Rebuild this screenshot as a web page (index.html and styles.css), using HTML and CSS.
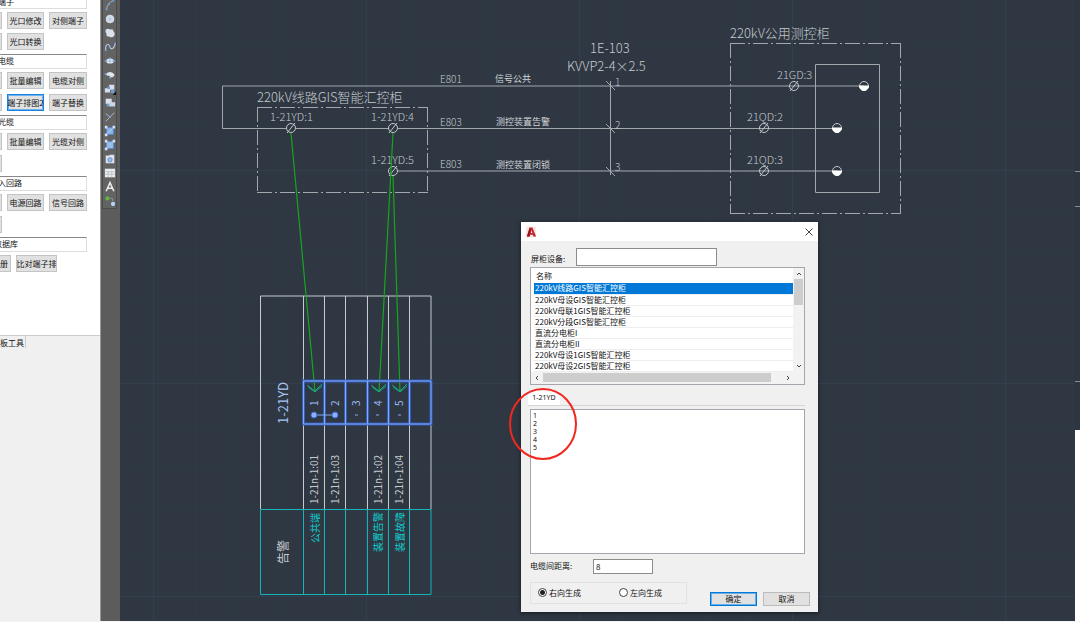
FILE: index.html
```html
<!DOCTYPE html>
<html lang="zh-CN">
<head>
<meta charset="utf-8">
<title>端子排图</title>
<link rel="stylesheet" href="styles.css">
</head>
<body>
<div class="workspace">
  <aside class="palette">
    <div class="palette-sheet">
      <h2 class="group-title first"><span>端子</span></h2>
      <div class="tools tight">
        <button aria-label="端子工具"></button><button>光口修改</button><button>对侧端子</button>
        <button aria-label="光口工具"></button><button>光口转换</button>
      </div>
      <h2 class="group-title"><span>电缆</span></h2>
      <div class="tools">
        <button aria-label="电缆工具"></button><button>批量编辑</button><button>电缆对侧</button>
        <button aria-label="端子排工具"></button><button class="focus">端子排图2</button><button>端子替换</button>
      </div>
      <h2 class="group-title"><span>光缆</span></h2>
      <div class="tools">
        <button aria-label="光缆工具"></button><button>批量编辑</button><button>光缆对侧</button>
        <button aria-label="光缆设置"></button>
      </div>
      <h2 class="group-title"><span>出入回路</span></h2>
      <div class="tools">
        <button aria-label="回路工具"></button><button>电源回路</button><button>信号回路</button>
        <button aria-label="回路设置"></button>
      </div>
      <h2 class="group-title"><span>数据库</span></h2>
      <div class="tools wide">
        <button>数据注册</button><button>比对端子排</button>
      </div>
    </div>
    <div class="palette-tab"><span>模板工具</span></div>
  </aside>

  <nav class="rail" aria-label="绘图">
    <div class="rail-tools">
      <button aria-label="圆弧"><svg viewBox="0 0 14 14"><path d="M3 12Q4 4 11 2" fill="none" stroke="#a9bfd8"/><path d="M2 11h2v2H2zM10 1h2v2h-2zM5 5h2v2H5z" fill="#6fa0dd"/></svg></button>
      <button aria-label="圆"><svg viewBox="0 0 14 14"><circle cx="7" cy="7" r="4.500" fill="#cfdae8" stroke="#e2e7ee"/><circle cx="7" cy="7" r="1" fill="#8fb1dc"/></svg></button>
      <button aria-label="修订云线"><svg viewBox="0 0 14 14"><path d="M2 3Q5 1 7 3Q11 2 11 5Q14 9 11 11Q8 13 6 11Q2 12 3 8Q1 6 2 3Z" fill="#dbe1e9"/></svg></button>
      <button aria-label="样条曲线"><svg viewBox="0 0 14 14"><path d="M2 11C1 1 7 4 7 7S12 10 13 3" fill="none" stroke="#b9cfeb" stroke-width="1.200"/><path d="M1 10h2v2H1zM6 6h2v2H6zM12 2h2v2h-2z" fill="#6fa0dd"/></svg></button>
      <button aria-label="椭圆"><svg viewBox="0 0 14 14"><ellipse cx="7" cy="7" rx="4.500" ry="3" fill="#dce4ee"/><path d="M1 6h3v2H1zM10 6h3v2h-3zM6 3h2v2H6zM6 6h2v2H6z" fill="#79a6de"/></svg></button>
      <button aria-label="椭圆弧"><svg viewBox="0 0 14 14"><path d="M2 6Q7 1 12 6Q13 9 7 10Q8 7 4 8Z" fill="#dfe5ed"/><path d="M1 5h2v2H1zM6 9h2v2H6z" fill="#79a6de"/></svg></button>
      <button aria-label="插入块"><svg viewBox="0 0 14 14"><path d="M1 6h6v5H1zM6 2h6v6H6z" fill="#d5deea"/><path d="M4 4h3v3H4zM8 8h4v4H8z" fill="#6d9bd5"/><path d="M14 10v4h-4z" fill="#111"/></svg></button>
      <button aria-label="创建块"><svg viewBox="0 0 14 14"><path d="M2 2h7v6H2z" fill="#dce3ec"/><path d="M6 6h7v5H6z" fill="#cad7e7"/><path d="M3 8h3v3H3z" fill="#719fd8"/></svg></button>
      <button aria-label="点"><svg viewBox="0 0 14 14"><path d="M2 3L7 7M12 2L2 12" fill="none" stroke="#b9c4d2"/><path d="M6 6h2v2H6z" fill="#79a6de"/></svg></button>
      <button aria-label="图案填充"><svg viewBox="0 0 14 14"><path d="M3 3h8v8H3z" fill="#8ab3e6" stroke="#4d88d0"/><path d="M1 1h3v3H1zM10 1h3v3h-3zM1 10h3v3H1z" fill="#d3e1f3"/><path d="M5 9L9 5" stroke="#c5d9f2"/></svg></button>
      <button aria-label="渐变色"><svg viewBox="0 0 14 14"><path d="M3 3h8v8H3z" fill="#9dbde6" stroke="#4e91df"/><path d="M1 1h3v3H1zM10 1h3v3h-3zM1 10h3v3H1z" fill="#d3e1f3"/></svg></button>
      <button aria-label="面域"><svg viewBox="0 0 14 14"><path d="M2 3h4l1-1h5v10H2z" fill="#dbe3ed"/><circle cx="7" cy="8" r="2.500" fill="#9fc1ea" stroke="#5688c4"/></svg></button>
      <button aria-label="表格"><svg viewBox="0 0 14 14"><path d="M1 2h12v10H1z" fill="#e9ecef"/><path d="M1 5.500h12M1 8.500h12M5 5v7M9 5v7" stroke="#a4a9b0" stroke-width=".6"/></svg></button>
      <button aria-label="多行文字"><svg viewBox="0 0 14 14"><path d="M2.500 12L7 2L11.500 12M4 8.500h6" fill="none" stroke="#eee" stroke-width="1.800"/></svg></button>
      <button aria-label="添加选定对象"><svg viewBox="0 0 14 14"><circle cx="4" cy="4" r="2.500" fill="#62b33f"/><circle cx="10.500" cy="10.500" r="2.500" fill="#b6d3f5"/><path d="M7.500 4h2.500v3" fill="none" stroke="#8f9aa5"/></svg></button>
    </div>
  </nav>

  <main class="canvas">
    <svg class="drawing" aria-label="端子接线图">
      <defs>
        <pattern id="grid" x="33" y="170" width="213" height="213" patternUnits="userSpaceOnUse">
          <path class="grid-minor" d="M43 0V213M85 0V213M128 0V213M170 0V213M0 43H213M0 85H213M0 128H213M0 170H213"/>
          <path class="grid-major" d="M.5 0V213M0 .5H213"/>
        </pattern>
        <g id="terminal"><circle r="4.500"/><path d="M-4 5L4 -5"/></g>
        <g id="contact"><circle r="4.500"/><path class="solid" d="M-4.500 0H4.500A4.500 4.500 0 0 1 -4.500 0Z"/></g>
        <path id="arrow" d="M-8 -7L0 -1L7 -8M-7 -5L0 0L7 -6"/>
      </defs>
      <rect width="100%" height="100%" fill="url(#grid)"/>
      <g transform="translate(-120 0)">
        <g class="wire">
          <path d="M864 86H222.500V128.500H286M296 128.500H389M398 128.500H837M398 171H837M610.500 81V175"/>
          <path d="M606 81L615 90M606 124L615 133M606 167L615 176"/>
          <path d="M815.500 64.500H879.500V192.500H815.500Z"/>
        </g>
        <path class="frame" d="M257 107.500H428M257 192.500H428M257.500 107V193M427.500 107V193M730 43.500H901M730 213.500H901M730.500 43V214M900.500 43V214"/>
        <g class="symbol">
          <use href="#terminal" x="291" y="128"/><use href="#terminal" x="393" y="128"/><use href="#terminal" x="393" y="171"/>
          <use href="#terminal" x="794" y="86"/><use href="#terminal" x="764" y="128"/><use href="#terminal" x="764" y="171"/>
          <use href="#contact" x="864" y="86"/><use href="#contact" x="837" y="128"/><use href="#contact" x="837" y="171"/>
        </g>
        <g class="label large">
          <text x="257" y="102">220kV线路GIS智能汇控柜</text>
          <text x="730" y="38">220kV公用测控柜</text>
          <text x="590" y="53">1E-103</text>
          <text x="567" y="71">KVVP2-4×2.5</text>
        </g>
        <g class="label medium">
          <text x="270" y="121">1-21YD:1</text><text x="371" y="121">1-21YD:4</text><text x="371" y="164">1-21YD:5</text>
          <text x="777" y="79">21GD:3</text><text x="747" y="121">21QD:2</text><text x="747" y="164">21QD:3</text>
        </g>
        <g class="label small">
          <text x="440" y="83">E801</text><text x="440" y="126">E803</text><text x="440" y="168">E803</text>
          <text x="615" y="86">1</text><text x="615" y="129">2</text><text x="615" y="171">3</text>
        </g>
        <g class="label note">
          <text x="495" y="82">信号公共</text><text x="496" y="125">测控装置告警</text><text x="496" y="168">测控装置闭锁</text>
        </g>

        <path class="table-line" d="M260.500 509V296H431V509M303.500 296V509M324.500 296V509M345.500 296V509M367.500 296V509M388.500 296V509M409.500 296V509"/>
        <path class="table-line cyan" d="M260.500 509.500H431V594.500H260.500ZM303.500 509V594M324.500 509V594M345.500 509V594M367.500 509V594M388.500 509V594M409.500 509V594"/>
        <path class="jump" d="M291 133L315 392M393 133L379 392M393 176L400 392"/>
        <g class="picked">
          <path class="glow" d="M303.500 381H431V424H303.500ZM324.500 381V424M345.500 381V424M367.500 381V424M388.500 381V424M409.500 381V424"/>
          <path class="core" d="M303.500 381H431V424H303.500ZM324.500 381V424M345.500 381V424M367.500 381V424M388.500 381V424M409.500 381V424"/>
          <path class="core" d="M314 415H335"/>
          <circle cx="314" cy="415" r="3"/><circle cx="335" cy="415" r="3"/>
          <path class="core" d="M355 415h3M376 415h3M398 415h3"/>
        </g>
        <g class="arrows"><use href="#arrow" x="315" y="392"/><use href="#arrow" x="379" y="392"/><use href="#arrow" x="400" y="392"/></g>
        <g class="label strip">
          <text class="name" transform="translate(288 424) rotate(-90)">1-21YD</text>
          <text class="pin" transform="translate(318 406) rotate(-90)">1</text>
          <text class="pin" transform="translate(339 406) rotate(-90)">2</text>
          <text class="pin" transform="translate(360 406) rotate(-90)">3</text>
          <text class="pin" transform="translate(382 406) rotate(-90)">4</text>
          <text class="pin" transform="translate(403 406) rotate(-90)">5</text>
          <text transform="translate(318 504) rotate(-90)">1-21n-1:01</text>
          <text transform="translate(339 504) rotate(-90)">1-21n-1:03</text>
          <text transform="translate(382 504) rotate(-90)">1-21n-1:02</text>
          <text transform="translate(403 504) rotate(-90)">1-21n-1:04</text>
          <text class="desc" transform="translate(319 543) rotate(-90)">公共端</text>
          <text class="desc" transform="translate(382 552) rotate(-90)">装置告警</text>
          <text class="desc" transform="translate(404 552) rotate(-90)">装置故障</text>
          <text class="kind" transform="translate(288 564) rotate(-90)">告警</text>
        </g>
      </g>
    </svg>

    <form class="dialog" role="dialog" aria-label="屏柜设备">
      <header class="titlebar">
        <svg class="logo" viewBox="0 0 12 12"><path d="M0 0h11v12H0z" fill="#f9e5e0"/><path d="M1 11L4 1H7L11 11H8L7.300 9H4.600L4 11ZM5 7H7L6 4Z" fill="#c3272f"/><path d="M1 11L4 1L5 4L4 11Z" fill="#97171f"/></svg>
        <button type="button" class="close" aria-label="关闭"><svg viewBox="0 0 8 8"><path d="M.5 .5L7.500 7.500M7.500 .5L.5 7.500" fill="none" stroke="#333" stroke-width=".9"/></svg></button>
      </header>
      <div class="content">
        <div class="field device"><label for="device">屏柜设备:</label><input id="device" type="text"></div>
        <div class="listview">
          <table>
            <thead><tr><th>名称</th></tr></thead>
            <tbody>
              <tr class="selected"><td>220kV线路GIS智能汇控柜</td></tr>
              <tr><td>220kV母设GIS智能汇控柜</td></tr>
              <tr><td>220kV母联1GIS智能汇控柜</td></tr>
              <tr><td>220kV分段GIS智能汇控柜</td></tr>
              <tr><td>直流分电柜I</td></tr>
              <tr><td>直流分电柜II</td></tr>
              <tr><td>220kV母设1GIS智能汇控柜</td></tr>
              <tr><td>220kV母设2GIS智能汇控柜</td></tr>
            </tbody>
          </table>
          <div class="vscroll">
            <svg viewBox="0 0 6 6"><path d="M1 4L3 2L5 4"/></svg><i class="thumb"></i><svg viewBox="0 0 6 6"><path d="M1 2L3 4L5 2"/></svg>
          </div>
          <div class="hscroll">
            <svg viewBox="0 0 6 6"><path d="M4 1L2 3L4 5"/></svg><i class="thumb"></i><svg viewBox="0 0 6 6"><path d="M2 1L4 3L2 5"/></svg>
          </div>
        </div>
        <div class="tabs"><button type="button">1-21YD</button></div>
        <ul class="pins"><li>1</li><li>2</li><li>3</li><li>4</li><li>5</li></ul>
        <div class="field spacing"><label for="spacing">电缆间距离:</label><input id="spacing" type="text" value="8"></div>
        <div class="footer">
          <div class="choices">
            <label><input type="radio" name="side" checked>右向生成</label>
            <label><input type="radio" name="side">左向生成</label>
          </div>
          <div class="actions">
            <button type="submit" class="primary">确定</button>
            <button type="button">取消</button>
          </div>
        </div>
      </div>
      <svg class="callout" viewBox="0 0 68 74"><ellipse cx="34" cy="37" rx="33" ry="35"/></svg>
    </form>
  </main>

  <div class="edge">
    <svg viewBox="0 0 5 430"><path d="M0 171.500H5M0 206.500H5M0 381.500H5"/></svg>
    <div class="edge-page"></div>
  </div>
</div>
</body>
</html>
```
FILE: styles.css
```css
* { box-sizing: border-box; }

body {
  margin: 0;
  background: #f4f4f6;
  color: #111;
  font: 8px/10px "Noto Sans CJK SC", sans-serif;
}

button, input { font: inherit; color: inherit; margin: 0; padding: 0; }

.workspace {
  display: flex;
  height: 100vh;
  padding-bottom: 1px;
  overflow: hidden;
}

/* tool palette */
.palette {
  flex: 0 0 100px;
  overflow: hidden;
  background: #f0f0f0;
}
.palette-sheet {
  padding-bottom: 59px;
  background: #fff;
  border-bottom: 1px solid #ccc;
}
.group-title {
  height: 15px;
  margin: 4px 13px 3px -35px;
  border: 1px solid #ddd;
  border-top: 1px solid #888;
  font-size: 8px;
  font-weight: 400;
  line-height: 11px;
}
.group-title span { display: block; width: 80px; text-align: center; }
.group-title.first { margin-top: -6px; line-height: 14px; }
.tools {
  display: grid;
  grid-template-columns: 38px 37px 38px;
  grid-auto-rows: 17px;
  gap: 5px;
  margin: 0 13px 4px -36px;
}
.tools.tight { row-gap: 4px; }
.tools.wide { grid-template-columns: 47px 41px; }
.tools button {
  border: 1px solid #c4c4c4;
  background: #e1e1e1;
  white-space: nowrap;
  overflow: hidden;
  display: flex;
  align-items: center;
  justify-content: center;
}
.tools.wide button:first-child { justify-content: flex-end; padding-right: 2px; }
.tools .focus { border: 1px solid #1683e0; box-shadow: inset 0 0 0 1px #6db2ee; }
.palette-tab { display: flex; margin-left: -8px; }
.palette-tab span {
  border-right: 1px solid #ccc;
  padding: 2px 1px 0 0;
}

/* drawing toolbar */
.rail {
  flex: 0 0 20px;
  background: #5c5c5c;
  border-left: 1px solid #999;
  overflow: hidden;
}
.rail-tools {
  display: flex;
  flex-direction: column;
  margin: -3px 3px 0 1px;
  background: #636363;
  border: 1px solid #4b4b4b;
}
.rail button {
  height: 14px;
  border: 0;
  background: none;
  display: flex;
  justify-content: center;
}
.rail svg { width: 12px; height: 14px; }

/* model space */
.canvas {
  flex: 1;
  min-width: 0;
  position: relative;
  overflow: hidden;
  background: #2e3742;
}
.drawing { display: block; width: 100%; height: 100%; }
.drawing path, .drawing circle { fill: none; }
.grid-minor { stroke: #2f3944; }
.grid-major { stroke: #343f4e; }
.wire { stroke: #a3a8ad; }
.frame { stroke: #a3a8ad; stroke-dasharray: 15 3 2 3; }
.symbol { stroke: #c4c8cb; }
.drawing .solid { fill: #fff; stroke: #fff; }
.table-line { stroke: #c8cbce; }
.table-line.cyan { stroke: #12b5b9; }
.jump { stroke: #16a61e; stroke-width: 1.2; }
.drawing .glow { stroke: #315dbd; stroke-width: 3; }
.picked .core { stroke: #84a9f5; }
.drawing .picked circle { fill: #8bb0ff; stroke: #3c6cd8; }
.arrows { stroke: #1ba584; }
.label {
  fill: #c6cace;
  font-family: "Noto Sans CJK SC", sans-serif;
  font-weight: 300;
}
.large { font-size: 13px; }
.medium { font-size: 11px; }
.small { font-size: 10px; }
.note { font-size: 9px; font-weight: 400; fill: #d3d6d9; }
.strip { font-size: 10px; font-weight: 400; }
.strip .name { font-size: 13px; fill: #a9c4f5; }
.strip .pin { fill: #9ebaf2; }
.strip .desc { fill: #10d0d2; }
.strip .kind { font-size: 12px; }

/* dialog */
.dialog {
  position: absolute;
  left: 401px;
  top: 222px;
  width: 297px;
  background: #f0f0f0;
  box-shadow: 0 1px 4px #0008;
}
.titlebar {
  display: flex;
  align-items: center;
  justify-content: space-between;
  height: 19px;
  padding: 0 5px;
  background: #fff;
}
.logo { width: 11px; height: 12px; }
.close { border: 0; background: none; display: flex; }
.close svg { width: 8px; height: 8px; }
.content { padding: 7px 13px 6px 9px; }
.field { display: flex; align-items: center; }
.field input {
  border: 1px solid #8b8b8b;
  background: #fff;
  padding: 0 2px;
}
.device label { width: 46px; padding: 3px 0 0 1px; }
.device input { width: 141px; height: 18px; }
.listview {
  display: grid;
  grid-template-columns: 1fr 11px;
  margin-top: 1px;
  border: 1px solid #a5a5ae;
  background: #fff;
}
.listview table {
  border-collapse: collapse;
  margin-left: 3px;
}
.listview th {
  height: 15px;
  padding: 0 2px;
  text-align: left;
  font-weight: 400;
}
.listview td {
  height: 11px;
  padding: 0 1px;
  border-bottom: 1px solid #eee;
}
.listview tr { line-height: 10px; }
.listview .selected { background: #0078d7; color: #fff; }
.listview svg { width: 6px; height: 6px; fill: none; stroke: #444; }
.vscroll {
  display: flex;
  flex-direction: column;
  align-items: center;
  gap: 2px;
  padding: 3px 0;
  background: #f2f2f2;
}
.vscroll .thumb { width: 9px; height: 26px; background: #cdcdcd; }
.vscroll svg:last-child { margin-top: auto; }
.hscroll {
  grid-column: 1 / -1;
  display: flex;
  align-items: center;
  gap: 3px;
  height: 12px;
  padding: 0 13px 0 3px;
  background: #f2f2f2;
}
.hscroll .thumb { flex: 1; height: 9px; margin-right: 11px; background: #cdcdcd; }
.tabs {
  display: flex;
  margin: 6px 0 3px -2px;
  border-bottom: 1px solid #d5d5d5;
}
.tabs button {
  width: 32px;
  height: 14px;
  border: 0;
  background: #fff;
}
.tabs, .pins { font-family: "Noto Sans", sans-serif; }
.tabs button { font-size: 7px; }
.pins {
  height: 145px;
  margin: 0;
  padding: 2px;
  list-style: none;
  border: 1px solid #a5a5ae;
  background: #fff;
  font-size: 7px;
  line-height: 8px;
}
.spacing { margin: 5px 0 8px; }
.spacing label { width: 63px; }
.spacing input { width: 60px; height: 15px; }
.footer {
  display: flex;
  align-items: flex-start;
  justify-content: space-between;
  margin-right: -5px;
}
.choices {
  display: flex;
  gap: 38px;
  width: 157px;
  height: 22px;
  padding-left: 7px;
  border: 1px solid #e2e2e2;
}
.choices label { display: flex; align-items: center; gap: 2px; }
.choices input {
  appearance: none;
  width: 9px;
  height: 9px;
  border: 1px solid #444;
  border-radius: 50%;
  background: #fff;
}
.choices input:checked { background: radial-gradient(circle, #222 2px, #fff 3px); }
.actions { display: flex; gap: 6px; padding-top: 10px; }
.actions button {
  width: 47px;
  height: 14px;
  border: 1px solid #bbb;
  background: #e1e1e1;
}
.actions .primary { border: 1px solid #0078d7; box-shadow: inset 0 0 0 1px #66afe9; }
.callout {
  position: absolute;
  left: -12px;
  top: 165px;
  width: 68px;
  height: 74px;
  fill: none;
  stroke: #f0281e;
  stroke-width: 2;
  pointer-events: none;
}

/* neighbouring sheet */
.edge {
  flex: 0 0 5px;
  display: flex;
  flex-direction: column;
  background: #2b3640;
}
.edge svg { width: 5px; height: 430px; stroke: #889094; }
.edge-page { flex: 1; background: #fff; }
```
